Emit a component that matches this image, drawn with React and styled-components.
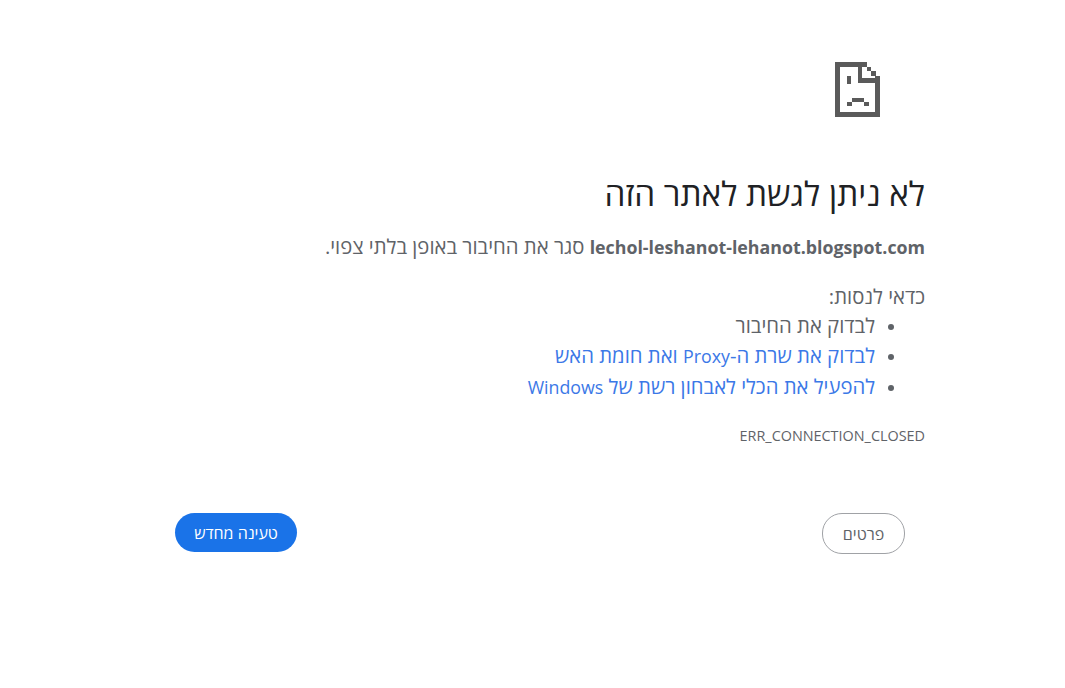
import React from 'react';
import styled, { createGlobalStyle } from 'styled-components';

const GlobalStyle = createGlobalStyle`
  html, body {
    margin: 0;
    padding: 0;
    background: #fff;
  }
  body {
    font-family: "Open Sans", "DejaVu Sans", sans-serif;
    color: #5f6368;
  }
`;

const Page = styled.div`
  direction: rtl;
  width: 750px;
  height: 688px;
  margin-left: 175px;
  padding-top: 62px;
  box-sizing: border-box;
`;

const IconBox = styled.div`
  height: 55px;
  padding-right: 45px;
  margin-bottom: 54px;
`;

const Title = styled.h1`
  margin: 0 0 18px;
  font-size: 33.3px;
  line-height: 44px;
  font-weight: 400;
  color: #202124;
`;

const Summary = styled.p`
  margin: 0 0 20px;
  font-size: 20.3px;
  line-height: 27px;
`;

// latin runs are set smaller, the hebrew face here is narrower than the original
const Latin = styled.span`
  font-size: 17.8px;
`;

const Host = styled(Latin)`
  font-weight: 700;
`;

const TryLabel = styled.div`
  font-size: 20.3px;
  line-height: 30px;
`;

const Suggestions = styled.ul`
  margin: -1px 0 24px;
  padding: 0 50px 0 0;
  font-size: 20.3px;
  line-height: 30px;
`;

const Suggestion = styled.li`
  color: ${props => (props.$link ? '#3b78e7' : '#5f6368')};
  &::marker {
    color: #5f6368;
    font-size: 18px;
  }
`;

const ErrorCode = styled.div`
  font-size: 14.4px;
  line-height: 20px;
  direction: ltr;
  text-align: right;
  margin-bottom: 67px;
`;

const Buttons = styled.div`
  display: flex;
  justify-content: space-between;
  align-items: flex-start;
  padding-right: 20px;
`;

const Button = styled.button`
  font-family: inherit;
  font-size: 16px;
  border-radius: 20px;
  cursor: pointer;
  box-sizing: border-box;
`;

const DetailsButton = styled(Button)`
  width: 83px;
  height: 41px;
  background: #fff;
  color: #5f6368;
  border: 1px solid #a0a2a6;
`;

const ReloadButton = styled(Button)`
  width: 122px;
  height: 39px;
  background: #1a73e8;
  color: #fff;
  border: none;
  font-weight: 500;
`;

const SadFile = () => (
  <svg width="45" height="55" viewBox="0 0 45 55" fill="#5a5a5a" aria-hidden="true">
    <rect x="0" y="0" width="5" height="55" />
    <rect x="40" y="14" width="5" height="41" />
    <rect x="0" y="0" width="32" height="5" />
    <rect x="0" y="50" width="45" height="5" />
    <rect x="23" y="0" width="4" height="21" />
    <rect x="23" y="16" width="22" height="5" />
    <rect x="32" y="5" width="4" height="4" />
    <rect x="36" y="9" width="5" height="5" />
    <rect x="12" y="14" width="4" height="8" />
    <rect x="17" y="36" width="12" height="4" />
    <rect x="12" y="40" width="5" height="4" />
    <rect x="29" y="40" width="5" height="4" />
  </svg>
);

const App = () => (
  <>
    <GlobalStyle />
    <Page>
      <IconBox>
        <SadFile />
      </IconBox>
      <Title>לא ניתן לגשת לאתר הזה</Title>
      <Summary>
        <Host>lechol-leshanot-lehanot.blogspot.com</Host> סגר את החיבור באופן בלתי צפוי.
      </Summary>
      <TryLabel>כדאי לנסות:</TryLabel>
      <Suggestions>
        <Suggestion>לבדוק את החיבור</Suggestion>
        <Suggestion $link>לבדוק את שרת ה-<Latin>Proxy</Latin> ואת חומת האש</Suggestion>
        <Suggestion $link>להפעיל את הכלי לאבחון רשת של <Latin>Windows</Latin></Suggestion>
      </Suggestions>
      <ErrorCode>ERR_CONNECTION_CLOSED</ErrorCode>
      <Buttons>
        <DetailsButton>פרטים</DetailsButton>
        <ReloadButton>טעינה מחדש</ReloadButton>
      </Buttons>
    </Page>
  </>
);

export default App;
